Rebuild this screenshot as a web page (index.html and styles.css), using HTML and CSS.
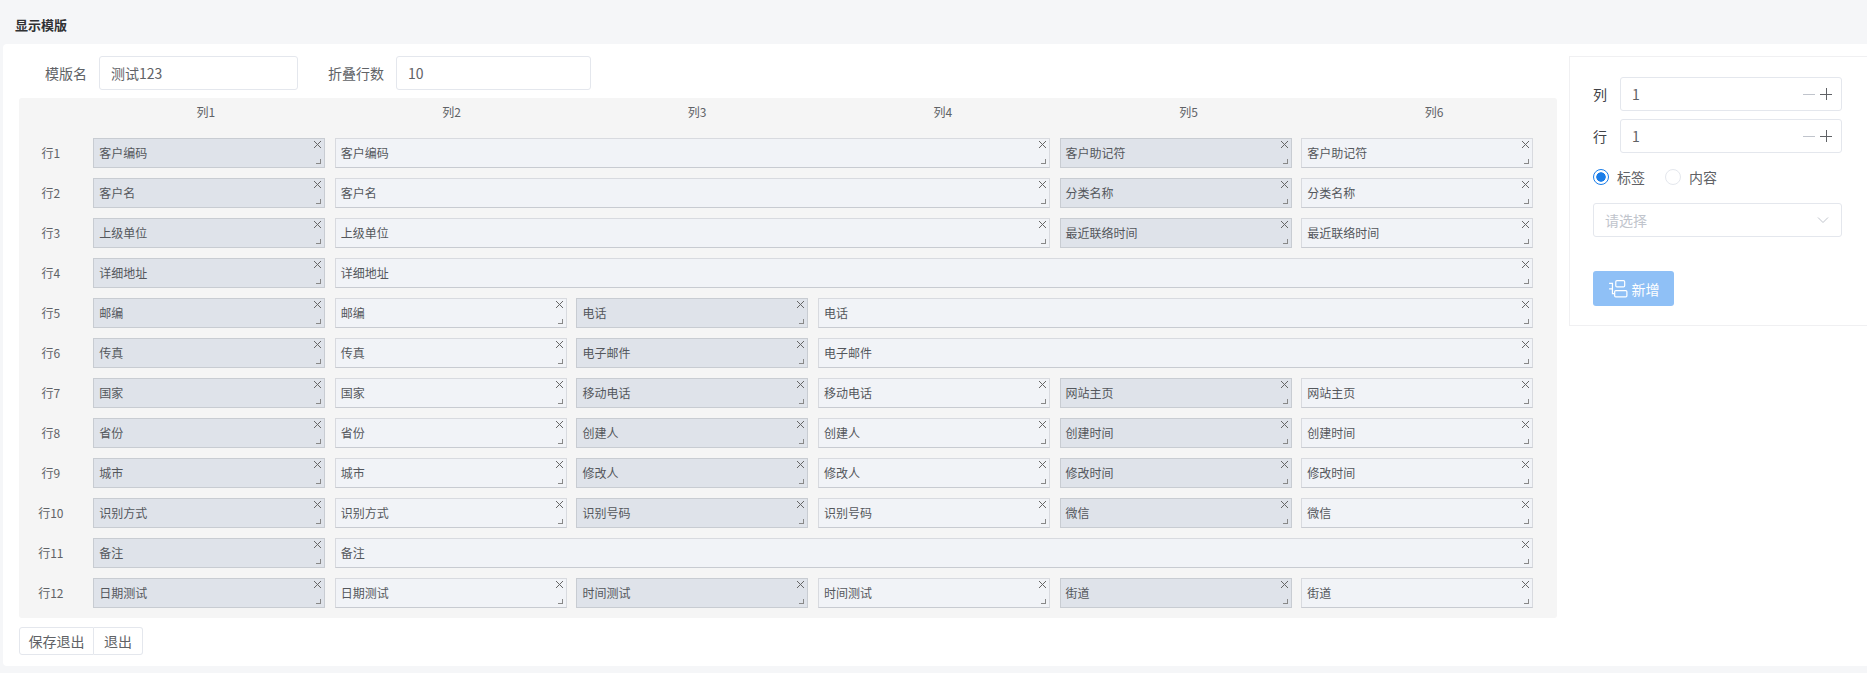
FILE: index.html
```html
<!DOCTYPE html>
<html lang="zh">
<head>
<meta charset="utf-8">
<title>显示模版</title>
<link rel="stylesheet" href="styles.css">
</head>
<body>
<header class="title">显示模版</header>
<main class="panel">
  <section class="editor">
    <div class="form-row">
      <label class="form-label name-label">模版名</label>
      <div class="input name-input">测试123</div>
      <label class="form-label fold-label">折叠行数</label>
      <div class="input fold-input">10</div>
    </div>
    <div class="board">
      <div class="col-heads">
        <div class="col-head">列1</div><div class="col-head">列2</div><div class="col-head">列3</div><div class="col-head">列4</div><div class="col-head">列5</div><div class="col-head">列6</div>
      </div>
      <div class="grid">
        <div class="row-head">行1</div>
        <div class="cell tag">客户编码<i class="x"></i><i class="grip"></i></div>
        <div class="cell span3">客户编码<i class="x"></i><i class="grip"></i></div>
        <div class="cell tag">客户助记符<i class="x"></i><i class="grip"></i></div>
        <div class="cell">客户助记符<i class="x"></i><i class="grip"></i></div>

        <div class="row-head">行2</div>
        <div class="cell tag">客户名<i class="x"></i><i class="grip"></i></div>
        <div class="cell span3">客户名<i class="x"></i><i class="grip"></i></div>
        <div class="cell tag">分类名称<i class="x"></i><i class="grip"></i></div>
        <div class="cell">分类名称<i class="x"></i><i class="grip"></i></div>

        <div class="row-head">行3</div>
        <div class="cell tag">上级单位<i class="x"></i><i class="grip"></i></div>
        <div class="cell span3">上级单位<i class="x"></i><i class="grip"></i></div>
        <div class="cell tag">最近联络时间<i class="x"></i><i class="grip"></i></div>
        <div class="cell">最近联络时间<i class="x"></i><i class="grip"></i></div>

        <div class="row-head">行4</div>
        <div class="cell tag">详细地址<i class="x"></i><i class="grip"></i></div>
        <div class="cell span5">详细地址<i class="x"></i><i class="grip"></i></div>

        <div class="row-head">行5</div>
        <div class="cell tag">邮编<i class="x"></i><i class="grip"></i></div>
        <div class="cell">邮编<i class="x"></i><i class="grip"></i></div>
        <div class="cell tag">电话<i class="x"></i><i class="grip"></i></div>
        <div class="cell span3">电话<i class="x"></i><i class="grip"></i></div>

        <div class="row-head">行6</div>
        <div class="cell tag">传真<i class="x"></i><i class="grip"></i></div>
        <div class="cell">传真<i class="x"></i><i class="grip"></i></div>
        <div class="cell tag">电子邮件<i class="x"></i><i class="grip"></i></div>
        <div class="cell span3">电子邮件<i class="x"></i><i class="grip"></i></div>

        <div class="row-head">行7</div>
        <div class="cell tag">国家<i class="x"></i><i class="grip"></i></div>
        <div class="cell">国家<i class="x"></i><i class="grip"></i></div>
        <div class="cell tag">移动电话<i class="x"></i><i class="grip"></i></div>
        <div class="cell">移动电话<i class="x"></i><i class="grip"></i></div>
        <div class="cell tag">网站主页<i class="x"></i><i class="grip"></i></div>
        <div class="cell">网站主页<i class="x"></i><i class="grip"></i></div>

        <div class="row-head">行8</div>
        <div class="cell tag">省份<i class="x"></i><i class="grip"></i></div>
        <div class="cell">省份<i class="x"></i><i class="grip"></i></div>
        <div class="cell tag">创建人<i class="x"></i><i class="grip"></i></div>
        <div class="cell">创建人<i class="x"></i><i class="grip"></i></div>
        <div class="cell tag">创建时间<i class="x"></i><i class="grip"></i></div>
        <div class="cell">创建时间<i class="x"></i><i class="grip"></i></div>

        <div class="row-head">行9</div>
        <div class="cell tag">城市<i class="x"></i><i class="grip"></i></div>
        <div class="cell">城市<i class="x"></i><i class="grip"></i></div>
        <div class="cell tag">修改人<i class="x"></i><i class="grip"></i></div>
        <div class="cell">修改人<i class="x"></i><i class="grip"></i></div>
        <div class="cell tag">修改时间<i class="x"></i><i class="grip"></i></div>
        <div class="cell">修改时间<i class="x"></i><i class="grip"></i></div>

        <div class="row-head">行10</div>
        <div class="cell tag">识别方式<i class="x"></i><i class="grip"></i></div>
        <div class="cell">识别方式<i class="x"></i><i class="grip"></i></div>
        <div class="cell tag">识别号码<i class="x"></i><i class="grip"></i></div>
        <div class="cell">识别号码<i class="x"></i><i class="grip"></i></div>
        <div class="cell tag">微信<i class="x"></i><i class="grip"></i></div>
        <div class="cell">微信<i class="x"></i><i class="grip"></i></div>

        <div class="row-head">行11</div>
        <div class="cell tag">备注<i class="x"></i><i class="grip"></i></div>
        <div class="cell span5">备注<i class="x"></i><i class="grip"></i></div>

        <div class="row-head">行12</div>
        <div class="cell tag">日期测试<i class="x"></i><i class="grip"></i></div>
        <div class="cell">日期测试<i class="x"></i><i class="grip"></i></div>
        <div class="cell tag">时间测试<i class="x"></i><i class="grip"></i></div>
        <div class="cell">时间测试<i class="x"></i><i class="grip"></i></div>
        <div class="cell tag">街道<i class="x"></i><i class="grip"></i></div>
        <div class="cell">街道<i class="x"></i><i class="grip"></i></div>
      </div>
    </div>
    <div class="btn-group">
      <button class="btn">保存退出</button><button class="btn btn-last">退出</button>
    </div>
  </section>
  <aside class="side">
    <div class="side-row">
      <span class="side-label">列</span>
      <div class="input num"><span class="num-value">1</span><span class="minus"></span><span class="plus"></span></div>
    </div>
    <div class="side-row">
      <span class="side-label">行</span>
      <div class="input num"><span class="num-value">1</span><span class="minus"></span><span class="plus"></span></div>
    </div>
    <div class="radios">
      <span class="radio on"></span><span class="radio-text">标签</span>
      <span class="radio"></span><span class="radio-text">内容</span>
    </div>
    <div class="input select">
      <span class="select-text">请选择</span>
      <svg class="chev" viewBox="0 0 12 8" width="12" height="8"><path d="M1 1.5 L6 6.5 L11 1.5" fill="none" stroke="#c0c4cc" stroke-width="1"/></svg>
    </div>
    <button class="add">
      <svg viewBox="0 0 18 18" width="20" height="20"><g fill="none" stroke="#fff" stroke-width="1.1"><rect x="7" y="1.5" width="8" height="5.5" rx="1"/><rect x="6" y="10.5" width="11" height="5.5" rx="1"/><path d="M1 4H4V13.2H6M1 8.8H4"/></g></svg>
      <span>新增</span>
    </button>
  </aside>
</main>
</body>
</html>
```
FILE: styles.css
```css
* { box-sizing: border-box; }
html, body { margin: 0; height: 673px; overflow: hidden; }
body {
  background: #f5f6f8;
  font-family: "Noto Sans CJK SC", "Noto Sans", sans-serif;
  color: #303133;
  display: flex;
  flex-direction: column;
}
.title {
  height: 44px;
  padding: 16px 0 0 15px;
  font-size: 13px;
  line-height: 18px;
  font-weight: 700;
  color: #303133;
}
.panel {
  height: 622px;
  margin-left: 3px;
  background: #fff;
  border-radius: 4px 0 0 4px;
  display: flex;
  padding: 12px 0 0 16px;
}
.editor { width: 1538px; flex: none; }
.form-row { display: flex; align-items: center; height: 34px; }
.form-label { font-size: 14px; color: #606266; text-align: right; }
.input {
  height: 34px;
  border: 1px solid #e4e7ed;
  border-radius: 3px;
  background: #fff;
  font-size: 14px;
  color: #606266;
  display: flex;
  align-items: center;
}
.name-label { margin-left: 26px; width: 42px; }
.name-input { margin-left: 12px; width: 199px; padding-left: 11px; }
.fold-label { margin-left: 29px; width: 57px; }
.fold-input { margin-left: 12px; width: 195px; padding-left: 11px; }
.board {
  margin-top: 8px;
  height: 520px;
  background: #f5f5f5;
  border-radius: 3px;
}
.col-heads { display: flex; height: 40px; padding-left: 64px; }
.col-head { flex: 1; font-size: 12px; color: #606266; text-align: center; line-height: 28px; }
.grid {
  display: grid;
  grid-template-columns: 64.6px repeat(6, 232px);
  column-gap: 9.6px;
  grid-template-rows: repeat(12, 30px);
  row-gap: 10px;
}
.row-head { font-size: 12px; color: #606266; text-align: center; line-height: 30px; padding-right: 1px; }
.cell {
  position: relative;
  height: 30px;
  border: 1px solid #d8dadf;
  border-bottom-color: #c8cbd1;
  background: #f1f3f7;
  font-size: 12px;
  line-height: 28px;
  padding-left: 5px;
  color: #54575c;
}
.tag { background: #dfe3ea; border-color: #c8ccd2; }
.span3 { grid-column: span 3; }
.span5 { grid-column: span 5; }
.x, .grip { position: absolute; display: block; }
.x { right: 3px; top: 2px; width: 7px; height: 7px;
  background:
    linear-gradient(45deg, transparent 44%, #666 44%, #666 56%, transparent 56%),
    linear-gradient(-45deg, transparent 44%, #666 44%, #666 56%, transparent 56%);
}
.grip { right: 3px; bottom: 3px; width: 5px; height: 5px; border-right: 1px solid #888; border-bottom: 1px solid #888; }
.btn-group { margin-top: 9px; display: flex; }
.btn {
  height: 28px;
  width: 75px;
  border: 1px solid #e4e7ed;
  border-radius: 3px 0 0 3px;
  background: #fff;
  font: 14px "Noto Sans CJK SC", sans-serif;
  color: #606266;
  padding: 0;
}
.btn-last { width: 49px; border-left: 0; border-radius: 0 3px 3px 0; }
.side {
  margin: 0 0 0 12px;
  width: 298px;
  height: 270px;
  border: 1px solid #f0f0f2;
  border-right: 0;
  padding: 20px 25px 0 23px;
  flex: none;
}
.side-row { display: flex; align-items: center; margin-bottom: 8px; }
.side-label { width: 27px; font-size: 14px; color: #404246; }
.num { flex: 1; padding: 0 9px 0 11px; }
.num-value { flex: 1; }
.minus, .plus { position: relative; width: 12px; height: 12px; margin-left: 5px; display: block; }
.minus::before, .plus::before { content: ""; position: absolute; left: 0; right: 0; top: 5.5px; height: 1px; background: #606266; }
.minus::before { background: #c0c4cc; }
.plus::after { content: ""; position: absolute; top: 0; bottom: 0; left: 5.5px; width: 1px; background: #606266; }
.radios { display: flex; align-items: center; height: 20px; margin-top: 14px; font-size: 14px; color: #606266; }
.radio { width: 16px; height: 16px; border-radius: 50%; border: 1px solid #e4e7ed; background: #fff; }
.radio.on { border-color: #1a7de8; background: radial-gradient(circle, #1a7de8 0, #1a7de8 4.4px, #fff 5px); }
.radio-text { margin-left: 8px; margin-right: 20px; }
.select { margin-top: 16px; padding: 0 12px 0 11px; justify-content: space-between; height: 34px; }
.select-text { color: #c0c4cc; }
.add {
  margin-top: 34px;
  width: 81px;
  height: 35px;
  background: #8fc0f6;
  border: 0;
  border-radius: 3px;
  color: #fff;
  font: 14px "Noto Sans CJK SC", sans-serif;
  display: flex;
  align-items: center;
  justify-content: center;
  gap: 4px;
  padding: 0;
}
```
